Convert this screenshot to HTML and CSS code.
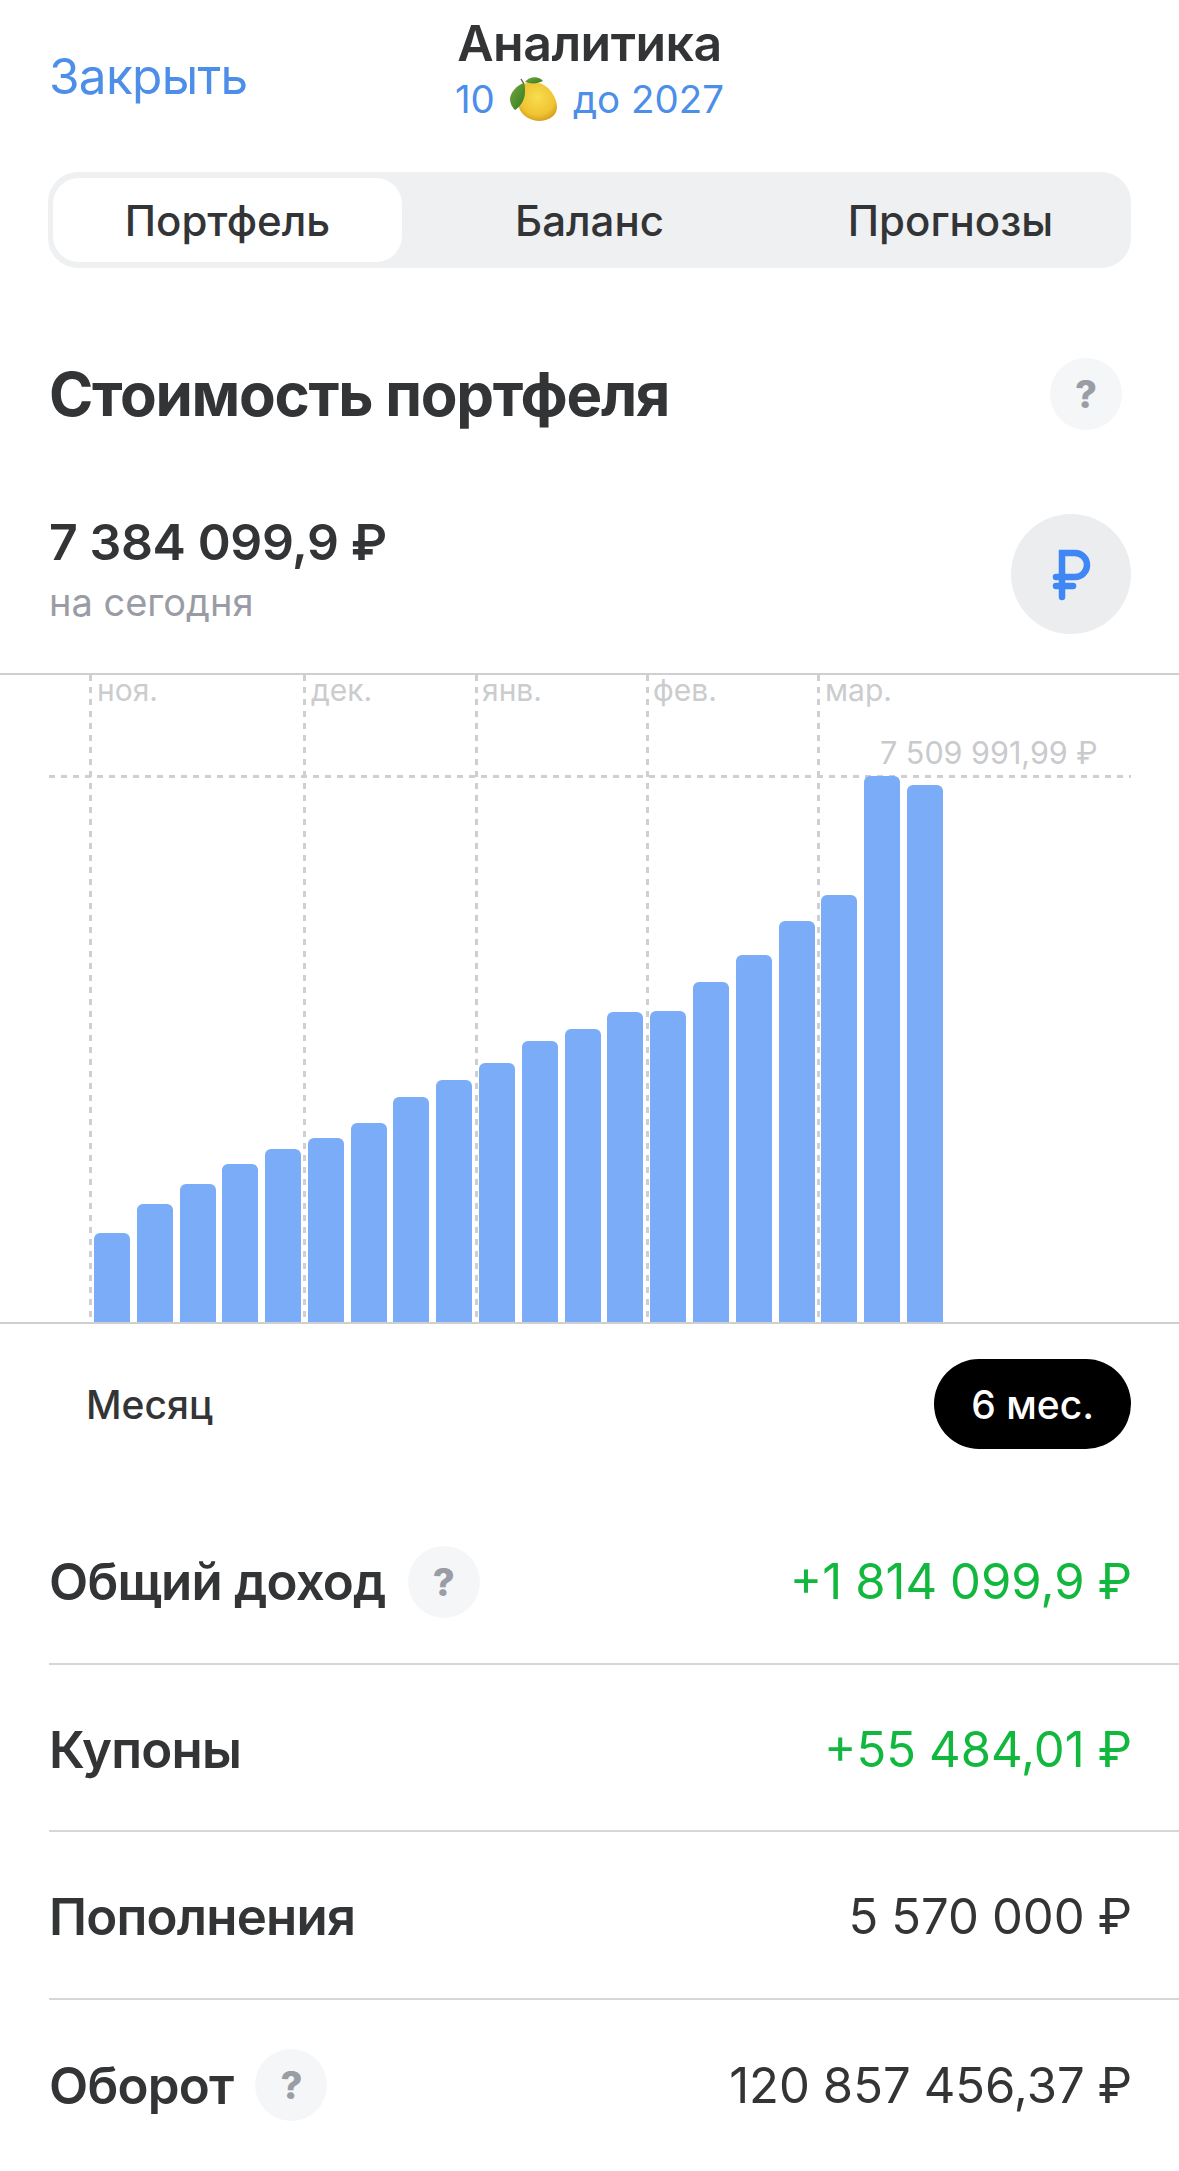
FILE: index.html
```html
<!DOCTYPE html>
<html lang="ru">
<head>
<meta charset="utf-8">
<title>Аналитика</title>
<link rel="stylesheet" href="styles.css">
</head>
<body>
<main class="page">
  <header class="header">
    <a class="close">Закрыть</a>
    <div class="title-block">
      <div class="title">Аналитика</div>
      <div class="subtitle"><span>10</span>
        <svg class="lemon" viewBox="0 0 48 46" aria-hidden="true">
          <defs>
            <radialGradient id="lemonBody" cx="0.5" cy="0.4" r="0.68">
              <stop offset="0" stop-color="#f8dc50"/>
              <stop offset="0.65" stop-color="#f0c431"/>
              <stop offset="1" stop-color="#c8901a"/>
            </radialGradient>
            <linearGradient id="lemonLeaf" x1="0" y1="0" x2="1" y2="1">
              <stop offset="0" stop-color="#77a83c"/>
              <stop offset="1" stop-color="#2f7a22"/>
            </linearGradient>
          </defs>
          <path d="M13 9C19 4 31 5 38 12C45 19 49 29 46 36C43 43 32 47 23 44C13 41 7 33 8 23C9 17 10 12 13 9Z" fill="url(#lemonBody)"/>
          <path d="M15 6C19 1 27 -1 33 5C27 8 21 8 15 6Z" fill="url(#lemonLeaf)"/>
          <path d="M14 7C7 9 0 17 0 23C0 28 3 32 5 34C10 31 15 24 15 16C15 12 15 9 14 7Z" fill="url(#lemonLeaf)"/>
          <path d="M11 3L14 8" stroke="#7a5a2a" stroke-width="1.4" fill="none"/>
        </svg>
        <span>до 2027</span></div>
    </div>
  </header>

  <nav class="segments">
    <div class="segment segment-active">Портфель</div>
    <div class="segment">Баланс</div>
    <div class="segment">Прогнозы</div>
  </nav>

  <section class="heading-row">
    <h1 class="heading">Стоимость портфеля</h1>
    <div class="help help-end">?</div>
  </section>

  <section class="value-row">
    <div>
      <div class="value">7 384 099,9 ₽</div>
      <div class="value-sub">на сегодня</div>
    </div>
    <div class="currency">
      <svg class="currency-icon" viewBox="0 0 120 120" aria-hidden="true">
        <path d="M51 83V39H64a12 12 0 0 1 0 24H45M45 72H62"/>
      </svg>
    </div>
  </section>

  <section class="chart">
    <div class="grid-v grid-v-1"></div>
    <div class="grid-v grid-v-2"></div>
    <div class="grid-v grid-v-3"></div>
    <div class="grid-v grid-v-4"></div>
    <div class="grid-v grid-v-5"></div>
    <div class="month month-1">ноя.</div>
    <div class="month month-2">дек.</div>
    <div class="month month-3">янв.</div>
    <div class="month month-4">фев.</div>
    <div class="month month-5">мар.</div>
    <div class="grid-h"></div>
    <div class="max-label">7 509 991,99 ₽</div>
    <div class="bars">
      <div class="bar" style="height:89px"></div>
      <div class="bar" style="height:118px"></div>
      <div class="bar" style="height:138px"></div>
      <div class="bar" style="height:158px"></div>
      <div class="bar" style="height:173px"></div>
      <div class="bar" style="height:184px"></div>
      <div class="bar" style="height:199px"></div>
      <div class="bar" style="height:225px"></div>
      <div class="bar" style="height:242px"></div>
      <div class="bar" style="height:259px"></div>
      <div class="bar" style="height:281px"></div>
      <div class="bar" style="height:293px"></div>
      <div class="bar" style="height:310px"></div>
      <div class="bar" style="height:311px"></div>
      <div class="bar" style="height:340px"></div>
      <div class="bar" style="height:367px"></div>
      <div class="bar" style="height:401px"></div>
      <div class="bar" style="height:427px"></div>
      <div class="bar" style="height:546px"></div>
      <div class="bar" style="height:537px"></div>
    </div>
  </section>

  <section class="periods">
    <div class="period">Месяц</div>
    <div class="period period-active">6 мес.</div>
  </section>

  <section class="rows">
    <div class="row">
      <div class="row-label"><span>Общий доход</span><div class="help">?</div></div>
      <div class="row-value positive">+1 814 099,9 ₽</div>
    </div>
    <div class="row">
      <div class="row-label"><span>Купоны</span></div>
      <div class="row-value positive">+55 484,01 ₽</div>
    </div>
    <div class="row">
      <div class="row-label"><span>Пополнения</span></div>
      <div class="row-value">5 570 000 ₽</div>
    </div>
    <div class="row">
      <div class="row-label"><span>Оборот</span><div class="help">?</div></div>
      <div class="row-value">120 857 456,37 ₽</div>
    </div>
  </section>
</main>
</body>
</html>
```

FILE: styles.css
```css
* { box-sizing: border-box; }
html, body { margin: 0; padding: 0; background: #fff; }
body {
  font-family: Inter, "Noto Sans", "Liberation Sans", sans-serif;
  color: #333436;
  width: 1179px;
  height: 2171px;
  overflow: hidden;
}
.page { display: flex; flex-direction: column; }

.header {
  display: grid;
  grid-template-columns: 1fr auto 1fr;
  padding: 14px 49px 0;
  margin-bottom: 46px;
}
.close {
  font-size: 49.5px;
  line-height: 56px;
  letter-spacing: -0.7px;
  color: #4d8ee9;
  align-self: center;
  padding-top: 12px;
}
.title-block { display: flex; flex-direction: column; align-items: center; }
.title { font-size: 50px; line-height: 58px; font-weight: 600; letter-spacing: -0.5px; }
.subtitle {
  display: flex;
  align-items: center;
  gap: 15px;
  height: 54px;
  font-size: 38.5px;
  color: #4d8ee9;
}
.lemon { width: 48px; height: 46px; flex: none; }

.segments {
  display: grid;
  grid-template-columns: repeat(3, 1fr);
  margin: 0 48px;
  height: 96px;
  background: #eef0f2;
  border-radius: 30px;
}
.segment {
  display: flex;
  align-items: center;
  justify-content: center;
  font-size: 42px;
  font-weight: 500;
}
.segment-active {
  background: #fff;
  margin: 6px 7px 6px 5px;
  border-radius: 26px;
}

.heading-row {
  display: flex;
  align-items: center;
  justify-content: space-between;
  margin: 90px 49px 0;
}
.heading { margin: 0; font-size: 60px; line-height: 72px; font-weight: 700; letter-spacing: -1.3px; }
.help {
  width: 72px;
  height: 72px;
  flex: none;
  border-radius: 50%;
  background: #f5f6f8;
  color: #9a9da5;
  display: flex;
  align-items: center;
  justify-content: center;
  font-size: 38px;
  font-weight: 800;
}
.help-end { margin-right: 8px; }

.value-row {
  display: flex;
  justify-content: space-between;
  margin: 84px 48px 0 49px;
}
.value { font-size: 50px; line-height: 56px; font-weight: 600; letter-spacing: -0.4px; }
.value-sub { margin-top: 7px; font-size: 38px; line-height: 50px; color: #9a9ca5; }
.currency { width: 120px; height: 120px; border-radius: 50%; background: #ebedef; flex: none; }
.currency-icon {
  display: block;
  width: 120px;
  height: 120px;
  fill: none;
  stroke: #3f87f5;
  stroke-width: 6.5;
  stroke-linecap: round;
}

.chart {
  position: relative;
  height: 651px;
  margin-top: 39px;
  border-top: 2px solid #cfcfd2;
  border-bottom: 2px solid #cfcfd2;
}
.bars {
  position: absolute;
  left: 94px;
  bottom: 0;
  display: flex;
  align-items: flex-end;
  gap: 6.79px;
}
.bar { width: 36px; background: #7aacf8; border-radius: 6px 6px 0 0; }
.grid-v {
  position: absolute;
  top: 0;
  bottom: 0;
  width: 3px;
  background: repeating-linear-gradient(to bottom, #cfcfd1 0 6px, transparent 6px 12px);
}
.grid-v-1 { left: 89px; }
.grid-v-2 { left: 303px; }
.grid-v-3 { left: 475px; }
.grid-v-4 { left: 646px; }
.grid-v-5 { left: 817px; }
.grid-h {
  position: absolute;
  left: 49px;
  right: 48px;
  top: 100px;
  height: 3px;
  background: repeating-linear-gradient(to right, #cfcfd1 0 6px, transparent 6px 12px);
}
.month {
  position: absolute;
  top: -2px;
  font-size: 30px;
  line-height: 34px;
  color: #cbccce;
}
.month-1 { left: 97px; }
.month-2 { left: 311px; }
.month-3 { left: 482px; }
.month-4 { left: 653px; }
.month-5 { left: 825px; }
.max-label {
  position: absolute;
  left: 880px;
  top: 60px;
  font-size: 30.5px;
  line-height: 36px;
  color: #c9cacd;
}

.periods {
  display: flex;
  justify-content: space-between;
  margin: 35px 48px 0 49px;
}
.period {
  height: 90px;
  display: flex;
  align-items: center;
  padding: 0 37px;
  font-size: 39px;
  font-weight: 500;
  border-radius: 45px;
}
.period-active { background: #000; color: #fff; }

.rows { margin: 48px 0 0 49px; }
.row {
  height: 167.5px;
  display: flex;
  align-items: center;
  justify-content: space-between;
  padding: 4px 47px 0 0;
  border-bottom: 2px solid #d7d7d9;
}
.row:last-child { border-bottom: 0; }
.row-label { display: flex; align-items: center; gap: 22px; font-size: 51px; font-weight: 600; letter-spacing: -0.8px; }
.row-label .help { letter-spacing: 0; }
.row-value { font-size: 49px; word-spacing: -0.8px; }
.positive { color: #12b83e; }
```
